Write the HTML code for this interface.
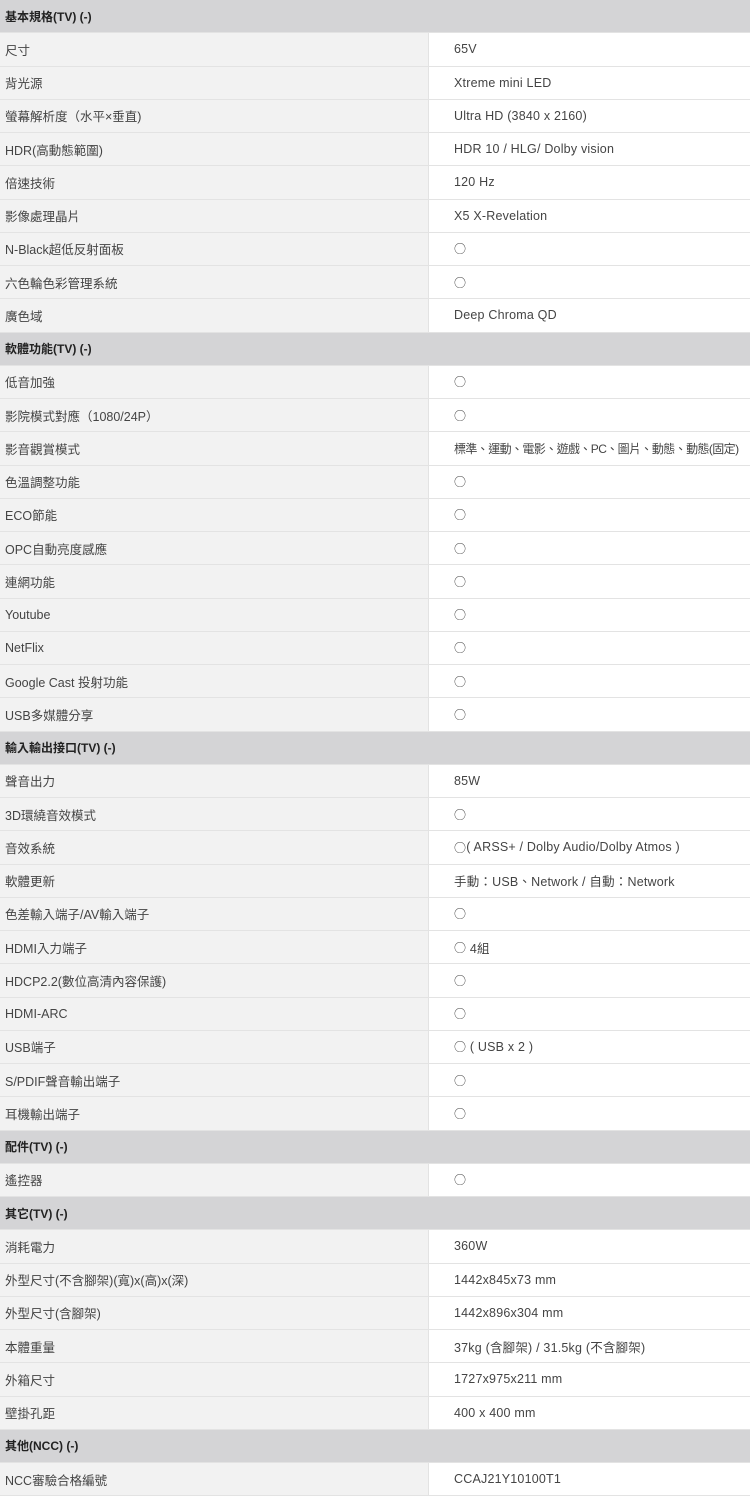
<!DOCTYPE html>
<html><head><meta charset="utf-8"><style>
body{margin:0;width:750px;height:1502px;background:#fff;font-family:"Liberation Sans","Noto Sans CJK TC",sans-serif;font-size:12.5px;color:#444;overflow:hidden}
.r{display:flex;height:32.25px;border-bottom:1px solid #e3e3e3;box-sizing:content-box;white-space:nowrap;overflow:hidden}
.h{background:#d4d4d6;font-weight:bold;color:#222;align-items:center;padding-left:5px;height:32.25px;font-size:12px}
.l{width:429px;flex:0 0 429px;background:#f2f2f2;border-right:1px solid #e3e3e3;display:flex;align-items:center;padding-left:5px;box-sizing:border-box}
.v{flex:1;display:flex;align-items:center;padding-left:25px;letter-spacing:0.2px;min-width:0}
.v.t{letter-spacing:-0.6px;font-size:12px}
o{font-family:"Noto Sans CJK TC",sans-serif;font-style:normal;font-size:12px}
</style></head><body>
<div class="r h">基本規格(TV) (-)</div>
<div class="r"><div class="l">尺寸</div><div class="v">65V</div></div>
<div class="r"><div class="l">背光源</div><div class="v">Xtreme mini LED</div></div>
<div class="r"><div class="l">螢幕解析度（水平×垂直)</div><div class="v">Ultra HD (3840 x 2160)</div></div>
<div class="r"><div class="l">HDR(高動態範圍)</div><div class="v">HDR 10 / HLG/ Dolby vision</div></div>
<div class="r"><div class="l">倍速技術</div><div class="v">120 Hz</div></div>
<div class="r"><div class="l">影像處理晶片</div><div class="v">X5 X-Revelation</div></div>
<div class="r"><div class="l">N-Black超低反射面板</div><div class="v"><o>○</o></div></div>
<div class="r"><div class="l">六色輪色彩管理系統</div><div class="v"><o>○</o></div></div>
<div class="r"><div class="l">廣色域</div><div class="v">Deep Chroma QD</div></div>
<div class="r h">軟體功能(TV) (-)</div>
<div class="r"><div class="l">低音加強</div><div class="v"><o>○</o></div></div>
<div class="r"><div class="l">影院模式對應（1080/24P）</div><div class="v"><o>○</o></div></div>
<div class="r"><div class="l">影音觀賞模式</div><div class="v t">標準、運動、電影、遊戲、PC、圖片、動態、動態(固定)</div></div>
<div class="r"><div class="l">色溫調整功能</div><div class="v"><o>○</o></div></div>
<div class="r"><div class="l">ECO節能</div><div class="v"><o>○</o></div></div>
<div class="r"><div class="l">OPC自動亮度感應</div><div class="v"><o>○</o></div></div>
<div class="r"><div class="l">連網功能</div><div class="v"><o>○</o></div></div>
<div class="r"><div class="l">Youtube</div><div class="v"><o>○</o></div></div>
<div class="r"><div class="l">NetFlix</div><div class="v"><o>○</o></div></div>
<div class="r"><div class="l">Google Cast 投射功能</div><div class="v"><o>○</o></div></div>
<div class="r"><div class="l">USB多媒體分享</div><div class="v"><o>○</o></div></div>
<div class="r h">輸入輸出接口(TV) (-)</div>
<div class="r"><div class="l">聲音出力</div><div class="v">85W</div></div>
<div class="r"><div class="l">3D環繞音效模式</div><div class="v"><o>○</o></div></div>
<div class="r"><div class="l">音效系統</div><div class="v"><o>○</o>( ARSS+ / Dolby Audio/Dolby Atmos )</div></div>
<div class="r"><div class="l">軟體更新</div><div class="v">手動：USB、Network / 自動：Network</div></div>
<div class="r"><div class="l">色差輸入端子/AV輸入端子</div><div class="v"><o>○</o></div></div>
<div class="r"><div class="l">HDMI入力端子</div><div class="v"><o>○</o>&nbsp;4組</div></div>
<div class="r"><div class="l">HDCP2.2(數位高清內容保護)</div><div class="v"><o>○</o></div></div>
<div class="r"><div class="l">HDMI-ARC</div><div class="v"><o>○</o></div></div>
<div class="r"><div class="l">USB端子</div><div class="v"><o>○</o>&nbsp;( USB x 2 )</div></div>
<div class="r"><div class="l">S/PDIF聲音輸出端子</div><div class="v"><o>○</o></div></div>
<div class="r"><div class="l">耳機輸出端子</div><div class="v"><o>○</o></div></div>
<div class="r h">配件(TV) (-)</div>
<div class="r"><div class="l">遙控器</div><div class="v"><o>○</o></div></div>
<div class="r h">其它(TV) (-)</div>
<div class="r"><div class="l">消耗電力</div><div class="v">360W</div></div>
<div class="r"><div class="l">外型尺寸(不含腳架)(寬)x(高)x(深)</div><div class="v">1442x845x73 mm</div></div>
<div class="r"><div class="l">外型尺寸(含腳架)</div><div class="v">1442x896x304 mm</div></div>
<div class="r"><div class="l">本體重量</div><div class="v">37kg (含腳架) / 31.5kg (不含腳架)</div></div>
<div class="r"><div class="l">外箱尺寸</div><div class="v">1727x975x211 mm</div></div>
<div class="r"><div class="l">壁掛孔距</div><div class="v">400 x 400 mm</div></div>
<div class="r h">其他(NCC) (-)</div>
<div class="r"><div class="l">NCC審驗合格編號</div><div class="v">CCAJ21Y10100T1</div></div>
</body></html>
